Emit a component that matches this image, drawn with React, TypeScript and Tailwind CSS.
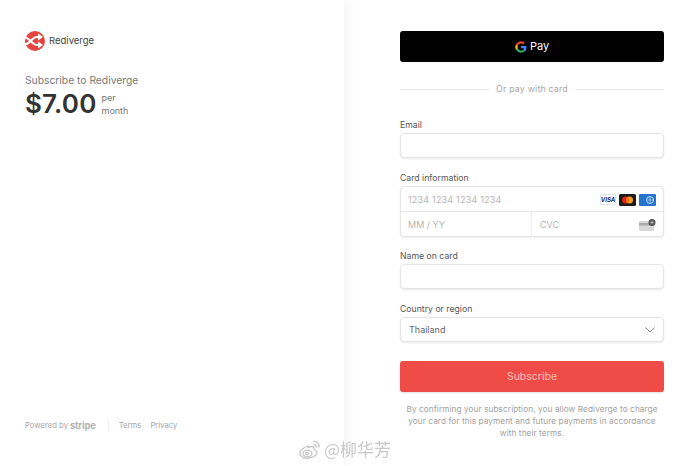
const fieldBox = "h-[25px] rounded-[4px] border border-[#e6e6e6] bg-white shadow-[0_1px_2px_rgba(0,0,0,0.09)]";

function Logo() {
  return (
    <svg width="20" height="20" viewBox="0 0 20 20">
      <circle cx="10" cy="10" r="10" fill="#e5453f" />
      <path d="M0 6.500 C5 7 7 14 12 14 M0 13.500 C5 13 7 6 12 6 M11 6 H15 M11 14 H15" fill="none" stroke="#fff" strokeWidth="2" />
      <path d="M13 2.500 L18 6 L13 9.500 Z M13 10.500 L18 14 L13 17.500 Z" fill="#fff" />
    </svg>
  );
}

function GoogleG() {
  return (
    <svg width="12" height="12" viewBox="0 0 48 48">
      <path fill="#4285F4" d="M46 24.500c0-1.600-.1-3.100-.4-4.500H24v8.500h12.400c-.5 2.900-2.100 5.300-4.600 7v5.800h7.400C43.600 37.800 46 31.700 46 24.500z" />
      <path fill="#34A853" d="M24 47c6.200 0 11.400-2.100 15.200-5.600l-7.400-5.800c-2.100 1.400-4.700 2.200-7.800 2.200-6 0-11.100-4-12.900-9.500H3.500v5.900C7.300 41.800 15 47 24 47z" />
      <path fill="#FBBC05" d="M11.100 28.300c-.5-1.400-.7-2.800-.7-4.300s.3-2.900.7-4.300v-5.900H3.500C2 16.800 1 20.300 1 24s.9 7.200 2.500 10.200l7.600-5.900z" />
      <path fill="#EA4335" d="M24 10.200c3.400 0 6.400 1.200 8.800 3.400l6.600-6.600C35.400 3.300 30.200 1 24 1 15 1 7.300 6.200 3.500 13.800l7.600 5.900C12.900 14.200 18 10.200 24 10.200z" />
    </svg>
  );
}

function CardBrands() {
  return (
    <div className="flex items-center gap-[3px]">
      <div className="flex h-[11px] w-[16px] items-center justify-center rounded-[1px] border border-[#e3e3e3] bg-white text-[6px] leading-none font-bold italic text-[#1a2a6c]">
        VISA
      </div>
      <svg width="17" height="12" viewBox="0 0 17 12">
        <rect width="17" height="12" rx="1.500" fill="#1c1c1c" />
        <circle cx="6.500" cy="6" r="3.500" fill="#e2231a" />
        <circle cx="10.500" cy="6" r="3.500" fill="#f79e1b" />
        <path d="M8.500 3.100a3.500 3.500 0 0 1 0 5.800a3.500 3.500 0 0 1 0-5.800z" fill="#f26a1b" />
      </svg>
      <svg width="17" height="12" viewBox="0 0 17 12">
        <rect width="17" height="12" rx="1" fill="#2673cf" />
        <circle cx="11" cy="6" r="3.500" fill="none" stroke="#b9d6f5" strokeWidth="1" />
        <path d="M7.500 6h7M11 2.500v7" stroke="#b9d6f5" strokeWidth="0.700" />
      </svg>
    </div>
  );
}

function CvcIcon() {
  return (
    <svg width="17" height="12" viewBox="0 0 17 12">
      <rect y="2" width="15" height="10" rx="1" fill="#d9d9d9" />
      <rect y="4" width="15" height="2.500" fill="#ababab" />
      <circle cx="13" cy="3.500" r="3.500" fill="#5a5a5a" />
      <path d="M11.500 3.500h3M13 2v3" stroke="#dddddd" strokeWidth="0.700" />
    </svg>
  );
}

function WeiboMark() {
  return (
    <svg width="24" height="22" viewBox="0 0 24 22" fill="none" stroke="#c4c4c4" strokeWidth="1.300">
      <path d="M10 8 C5 9.500 1.500 13 2 16 C2.500 19 7 20.500 11 20 C16 19.500 19.500 16.500 19 14 C18.700 12.500 17 12 16 11.500 C16.500 10 16 8.500 14 8.500 C12.500 8.500 11.500 9 10 9.500 C10.500 8 10.500 7.500 10 8 Z" />
      <ellipse cx="9.500" cy="15.500" rx="4.500" ry="3.300" />
      <circle cx="9" cy="15.500" r="1.300" />
      <path d="M15 3.500 C18.500 3 21.500 5.500 21 9.500 M15.500 6.500 C17.300 6.300 18.700 7.500 18.500 9.500" />
    </svg>
  );
}

function FieldLabel({ children }: { children: string }) {
  return <div className="h-[14px] text-[8.700px] leading-[12px] text-[#555555]">{children}</div>;
}

export default function App() {
  return (
    <div className="relative flex h-[466px] w-[690px] overflow-hidden bg-white font-['Inter','Liberation_Sans',sans-serif]">
      <div className="flex w-[344px] flex-col justify-between pt-[31px] pr-[25px] pb-[33px] pl-[25px] shadow-[2px_0_12px_rgba(0,0,0,0.05)]">
        <div>
          <div className="flex items-center gap-[4px]">
            <Logo />
            <span className="text-[9.500px] text-[#444444]">Rediverge</span>
          </div>
          <div className="mt-[22px] text-[10.300px] leading-[14px] text-[#7a7a7a]">Subscribe to Rediverge</div>
          <div className="mt-[2px] flex items-center gap-[5px]">
            <span className="text-[26px] leading-[30px] font-semibold tracking-[0.2px] text-[#333333]">$7.00</span>
            <span className="text-[9px] leading-[13px] text-[#777777]">
              per
              <br />
              month
            </span>
          </div>
        </div>
        <div className="flex items-center text-[7.700px] text-[#a6a6a6]">
          <span>Powered by</span>
          <span className="ml-[2px] text-[9.500px] font-bold tracking-[-0.2px] text-[#b3b3b3]">stripe</span>
          <div className="mr-[10px] ml-[12px] h-[12px] w-px bg-[#eeeeee]" />
          <span>Terms</span>
          <span className="ml-[9px]">Privacy</span>
        </div>
      </div>

      <div className="flex w-[346px] flex-1 flex-col pt-[31px] pl-[56px]">
        <div className="w-[264px]">
          <div className="flex h-[31px] items-center justify-center gap-[3px] rounded-[3px] bg-black text-[11px] text-white">
            <GoogleG />
            <span>Pay</span>
          </div>

          <div className="mt-[20px] flex h-[14px] items-center gap-[7px] text-[8.800px] tracking-[0.2px] text-[#a8a8a8]">
            <div className="h-px flex-1 bg-[#e8e8e8]" />
            <span>Or pay with card</span>
            <div className="h-px flex-1 bg-[#e8e8e8]" />
          </div>

          <div className="mt-[23px]">
            <FieldLabel>Email</FieldLabel>
            <div className={fieldBox} />
          </div>

          <div className="mt-[14px]">
            <FieldLabel>Card information</FieldLabel>
            <div className="h-[51px] rounded-[4px] border border-[#e6e6e6] bg-white text-[9px] text-[#b5b5b5] shadow-[0_1px_2px_rgba(0,0,0,0.09)]">
              <div className="flex h-[25px] items-center justify-between border-b border-[#e6e6e6] pt-[1px] pr-[7px] pl-[7px]">
                <span className="tracking-[0.2px]">1234 1234 1234 1234</span>
                <CardBrands />
              </div>
              <div className="flex h-[25px]">
                <div className="flex w-[131px] items-center border-r border-[#eeeeee] pl-[7px]">MM / YY</div>
                <div className="flex flex-1 items-center justify-between pr-[7px] pl-[8px]">
                  <span>CVC</span>
                  <CvcIcon />
                </div>
              </div>
            </div>
          </div>

          <div className="mt-[13px]">
            <FieldLabel>Name on card</FieldLabel>
            <div className={fieldBox} />
          </div>

          <div className="mt-[14px]">
            <FieldLabel>Country or region</FieldLabel>
            <div className={`${fieldBox} flex items-center justify-between pt-[1px] pr-[8px] pl-[8px] text-[9px] text-[#666666]`}>
              <span>Thailand</span>
              <svg width="10" height="6" viewBox="0 0 10 6" fill="none" stroke="#8a8a8a" strokeWidth="1">
                <path d="M0.500 0.500 L5 5 L9.500 0.500" />
              </svg>
            </div>
          </div>

          <div className="mt-[19px] flex h-[31px] items-center justify-center rounded-[3px] bg-[#ef4b47] pt-[1px] text-[10.500px] text-[#f9bfbc] shadow-[0_1px_2px_rgba(0,0,0,0.12)]">
            Subscribe
          </div>

          <p className="mt-[11px] px-[2px] text-center text-[8.200px] leading-[12px] tracking-[0.1px] text-[#a0a0a0]">
            By confirming your subscription, you allow Rediverge to charge your card for this payment and future payments in accordance with their terms.
          </p>
        </div>
      </div>

      <div className="absolute top-[438px] left-[298px] flex items-center gap-[2px] blur-[0.4px]">
        <WeiboMark />
        <span className="font-['Noto_Sans_CJK_SC','Noto_Sans',sans-serif] text-[17px] leading-[22px] text-[#c8c8c8]">@柳华芳</span>
      </div>
    </div>
  );
}
